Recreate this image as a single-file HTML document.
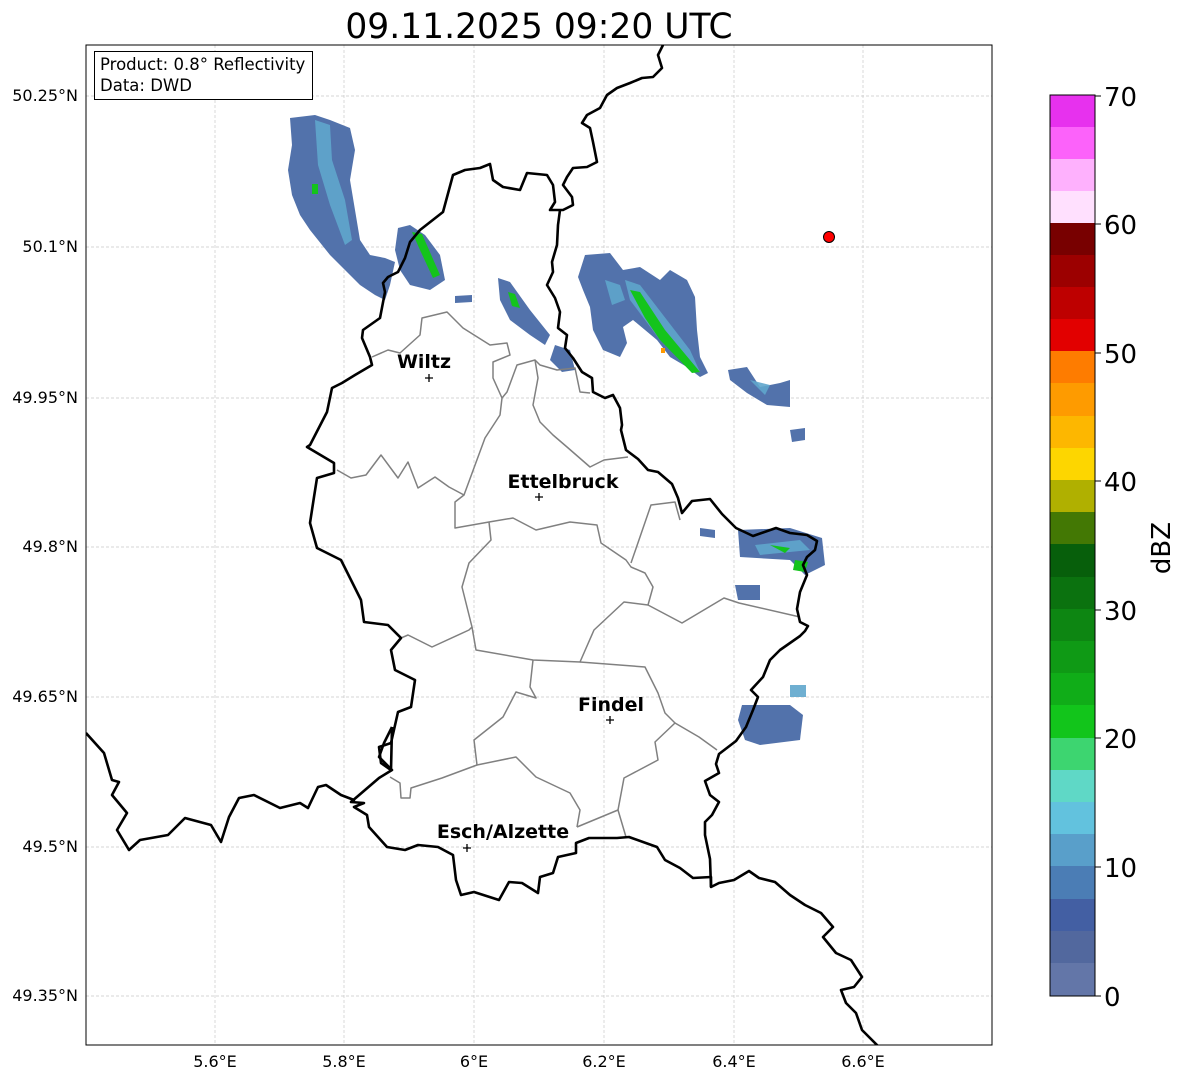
<!DOCTYPE html>
<html><head><meta charset="utf-8"><style>
html,body{margin:0;padding:0;background:#fff;}
svg{display:block;font-family:"DejaVu Sans","Liberation Sans",sans-serif;}
</style></head><body>
<svg width="1184" height="1081" viewBox="0 0 1184 1081" xmlns="http://www.w3.org/2000/svg">
<rect width="1184" height="1081" fill="#fff"/>
<text x="539" y="38" font-size="34.5" text-anchor="middle" fill="#000">09.11.2025 09:20 UTC</text>
<defs><clipPath id="c"><rect x="86" y="45" width="906" height="1000"/></clipPath></defs>
<g clip-path="url(#c)">
<g stroke="#c8c8c8" stroke-width="0.7" stroke-dasharray="3,2">
<line x1="215" y1="45" x2="215" y2="1045"/><line x1="344" y1="45" x2="344" y2="1045"/><line x1="474" y1="45" x2="474" y2="1045"/><line x1="604" y1="45" x2="604" y2="1045"/><line x1="734" y1="45" x2="734" y2="1045"/><line x1="863" y1="45" x2="863" y2="1045"/>
<line x1="86" y1="96" x2="992" y2="96"/><line x1="86" y1="247" x2="992" y2="247"/><line x1="86" y1="398" x2="992" y2="398"/><line x1="86" y1="547" x2="992" y2="547"/><line x1="86" y1="697" x2="992" y2="697"/><line x1="86" y1="847" x2="992" y2="847"/><line x1="86" y1="996" x2="992" y2="996"/>
</g>
<g fill="#5272ab">
<polygon points="290,118 315,115 330,120 350,128 355,150 350,180 355,210 360,240 370,255 385,258 395,262 390,285 385,300 375,295 360,285 345,270 330,255 310,230 300,215 292,195 288,170 292,145"/>
<polygon points="398,228 410,225 425,235 440,255 445,280 430,290 410,285 400,270 395,250"/>
<polygon points="498,278 510,282 530,310 550,335 545,345 530,335 510,320 500,300"/>
<polygon points="555,345 570,350 575,370 562,372 550,360"/>
<polygon points="585,255 610,253 623,270 640,267 660,280 670,270 687,280 695,297 697,330 700,357 708,373 700,377 687,367 670,357 657,340 633,320 623,327 627,343 620,357 603,350 593,330 590,307 583,290 578,277"/>
<polygon points="728,370 747,367 760,387 780,383 790,380 790,407 767,405 747,393 730,380"/>
<polygon points="790,430 805,428 805,440 792,442"/>
<polygon points="738,530 790,528 822,538 825,565 805,575 790,560 740,557"/>
<polygon points="735,585 760,585 760,600 738,600"/>
<polygon points="742,705 790,705 803,715 800,740 760,745 745,740 738,720"/>
<polygon points="700,528 715,530 715,538 700,536"/>
<polygon points="455,296 472,295 472,302 455,303"/>
</g>
<g fill="#5fa6cc" opacity="0.9">
<polygon points="315,120 330,125 332,160 345,200 352,240 345,245 330,205 318,165"/>
<polygon points="605,280 620,285 625,300 612,305"/>
<polygon points="625,280 640,285 690,350 700,372 690,370 660,340 630,300"/>
<polygon points="755,545 800,540 810,550 760,555"/>
<polygon points="790,685 806,685 806,697 790,697"/>
<polygon points="750,380 770,385 765,395"/>
</g>
<g fill="#14c41c">
<rect x="312" y="184" width="6" height="10"/>
<polygon points="412,232 422,234 440,275 433,278 420,250"/>
<polygon points="630,290 640,292 665,330 690,360 700,372 692,373 660,340 645,318"/>
<polygon points="508,292 515,294 520,308 512,306"/>
<polygon points="795,560 808,562 805,572 793,570"/>
<polygon points="770,545 790,548 785,553"/>
</g>
<rect x="661" y="348" width="4" height="5" fill="#ff9900"/>
<g fill="none" stroke="#808080" stroke-width="1.5" stroke-linejoin="round">
<polyline points="372,357 388,350 400,353 420,335 422,318 447,312 463,328 490,345 507,343 510,355 493,362 493,378 502,398 500,415 485,438 464,495"/>
<polyline points="502,398 507,392 517,365 535,360 540,365 557,370 575,368 580,392 590,393"/>
<polyline points="535,360 538,378 533,405 540,422 553,435 567,447 590,467 604,460 628,457"/>
<polyline points="337,470 351,478 366,475 381,455 398,478 408,462 418,488 435,477 449,487 464,495 455,502 455,528 489,522 513,518 536,530 570,522 597,525 601,543 626,560 631,567 645,573 653,587 648,605 682,623 724,598 739,603 800,617"/>
<polyline points="631,563 651,505 675,502 680,520"/>
<polyline points="489,522 491,540 469,563 462,587 472,627 469,630 432,647 408,635 401,638"/>
<polyline points="472,627 476,650 533,660 580,662 594,630 624,602 648,605"/>
<polyline points="533,660 530,687 536,698 516,692 503,717 474,740 477,765 442,778 411,788 410,798 401,798 400,783 390,777"/>
<polyline points="477,765 516,757 536,777 570,793 580,810 577,827"/>
<polyline points="577,827 618,810 626,837"/>
<polyline points="618,810 624,778 658,760 655,742 675,723 699,737 717,750"/>
<polyline points="580,662 645,667 658,693 665,713 675,723"/>
</g>
<g fill="none" stroke="#000" stroke-width="2.6" stroke-linejoin="round">
<polyline points="663,45 658,55 662,68 653,77 642,78 630,83 617,88 607,95 600,108 587,115 582,123 590,128 593,142 597,162 587,167 573,168 567,177 563,185 572,197 573,205 563,210 550,210 555,202 553,185 547,175 527,173 520,190 503,187 493,180 490,164 480,168 465,170 453,175 443,212 420,230 410,242 405,258 398,272 388,277 383,283 385,292 380,318 363,330 362,338 370,357 372,365 355,375 342,383 332,388 327,412 310,445 307,447 334,463 334,473 317,478 314,497 310,523 317,548 341,560 361,600 364,622 388,625 401,638 391,650 395,670 415,680 411,707 398,712 391,743 379,747 381,763 391,770 392,727"/>
<polyline points="392,727 384,743 379,757 392,770 379,778 351,802 364,803 354,807 367,815 369,827 387,847 405,850 418,845 438,847 453,855 456,880 461,895 474,892 499,900 509,882 522,883 538,893 540,877 553,873 558,857 576,853 576,843 589,838 617,838 629,837 657,847 665,860 680,868 693,878 711,877 711,887"/>
<polyline points="560,210 558,225 557,245 552,262 553,272 547,285 555,298 560,312 558,328 567,335 565,348 573,358 582,372 592,378 593,392 605,398 613,395 620,408 622,425 621,430 626,450 638,459 648,470 658,472 672,484 678,498 682,513 692,501 710,499 722,514 736,528 753,536 776,528 790,533 807,535 817,541 815,550 807,557 803,565 807,575 800,592 797,609 800,622 808,626 805,631 800,636 780,650 770,660 763,677 751,690 758,697 753,710 746,727 736,741 719,754 716,764 719,773 705,781 710,795 719,802 712,815 705,822 705,835 710,859 711,887 719,883 734,880 749,871 759,878 775,882 790,895 805,905 821,913 833,927 823,937 836,953 851,960 862,977 854,987 841,990 846,1003 856,1013 862,1030 877,1045 882,1050"/>
<polyline points="86,733 104,753 112,780 119,782 112,795 127,813 117,830 129,850 140,840 168,835 185,818 211,825 221,842 229,817 239,798 254,795 280,808 300,803 308,808 318,787 326,785 341,795 354,800 351,802"/>
</g>
<g font-weight="bold" font-size="19" text-anchor="middle" fill="#000">
<text x="424" y="368">Wiltz</text>
<text x="563" y="488">Ettelbruck</text>
<text x="611" y="711">Findel</text>
<text x="503" y="838">Esch/Alzette</text>
</g>
<g stroke="#000" stroke-width="1.3">
<path d="M425 378h8M429 374v8"/><path d="M535 497h8M539 493v8"/><path d="M606 720h8M610 716v8"/><path d="M463 848h8M467 844v8"/>
</g>
<circle cx="829" cy="237" r="5.5" fill="#f00" stroke="#000" stroke-width="1"/>
</g>
<rect x="86" y="45" width="906" height="1000" fill="none" stroke="#000" stroke-width="1"/>
<rect x="94.5" y="51.5" width="218" height="48" fill="#fff" stroke="#000" stroke-width="1"/>
<text x="100" y="70" font-size="16.5">Product: 0.8° Reflectivity</text>
<text x="100" y="91" font-size="16.5">Data: DWD</text>
<g font-size="16" text-anchor="end">
<text x="78" y="101">50.25°N</text><text x="78" y="252">50.1°N</text><text x="78" y="403">49.95°N</text><text x="78" y="552">49.8°N</text><text x="78" y="702">49.65°N</text><text x="78" y="852">49.5°N</text><text x="78" y="1001">49.35°N</text>
</g>
<g font-size="16" text-anchor="middle">
<text x="215" y="1067">5.6°E</text><text x="344" y="1067">5.8°E</text><text x="474" y="1067">6°E</text><text x="604" y="1067">6.2°E</text><text x="734" y="1067">6.4°E</text><text x="863" y="1067">6.6°E</text>
</g>
<g>
<rect x="1050" y="95" width="45" height="33" fill="#e731ee"/>
<rect x="1050" y="127" width="45" height="33" fill="#fc62fa"/>
<rect x="1050" y="159" width="45" height="33" fill="#feb1fd"/>
<rect x="1050" y="191" width="45" height="33" fill="#ffe0fe"/>
<rect x="1050" y="223" width="45" height="33" fill="#780000"/>
<rect x="1050" y="255" width="45" height="33" fill="#9c0000"/>
<rect x="1050" y="287" width="45" height="33" fill="#be0000"/>
<rect x="1050" y="319" width="45" height="33" fill="#e20000"/>
<rect x="1050" y="351" width="45" height="33" fill="#fe7c00"/>
<rect x="1050" y="383" width="45" height="33" fill="#fe9b00"/>
<rect x="1050" y="416" width="45" height="33" fill="#fdb700"/>
<rect x="1050" y="448" width="45" height="33" fill="#fdd600"/>
<rect x="1050" y="480" width="45" height="33" fill="#b0b000"/>
<rect x="1050" y="512" width="45" height="33" fill="#437804"/>
<rect x="1050" y="544" width="45" height="33" fill="#075f0b"/>
<rect x="1050" y="577" width="45" height="33" fill="#0b720f"/>
<rect x="1050" y="609" width="45" height="33" fill="#0d8612"/>
<rect x="1050" y="641" width="45" height="33" fill="#0f9a15"/>
<rect x="1050" y="673" width="45" height="33" fill="#10ad18"/>
<rect x="1050" y="705" width="45" height="33" fill="#12c51b"/>
<rect x="1050" y="738" width="45" height="33" fill="#3dd570"/>
<rect x="1050" y="770" width="45" height="33" fill="#5fd8c6"/>
<rect x="1050" y="802" width="45" height="33" fill="#62c2de"/>
<rect x="1050" y="834" width="45" height="33" fill="#599fca"/>
<rect x="1050" y="866" width="45" height="33" fill="#4b7db5"/>
<rect x="1050" y="899" width="45" height="33" fill="#435fa3"/>
<rect x="1050" y="931" width="45" height="33" fill="#52689e"/>
<rect x="1050" y="963" width="45" height="33" fill="#6376a8"/>
<rect x="1050" y="95" width="45" height="901" fill="none" stroke="#000" stroke-width="1"/>
<g stroke="#000" stroke-width="1"><path d="M1095 96h6M1095 224h6M1095 353h6M1095 481h6M1095 610h6M1095 738h6M1095 867h6M1095 996h6"/></g>
<g font-size="26">
<text x="1104" y="106">70</text><text x="1104" y="234">60</text><text x="1104" y="363">50</text><text x="1104" y="491">40</text><text x="1104" y="620">30</text><text x="1104" y="748">20</text><text x="1104" y="877">10</text><text x="1104" y="1006">0</text>
</g>
<text x="1170" y="548" font-size="26" text-anchor="middle" transform="rotate(-90 1170 548)">dBZ</text>
</g>
</svg>
</body></html>
